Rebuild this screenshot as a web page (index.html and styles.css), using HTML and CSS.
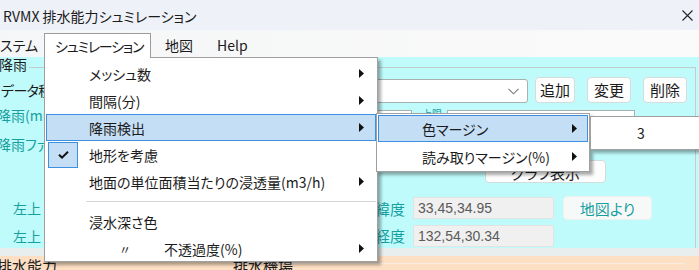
FILE: index.html
```html
<!DOCTYPE html>
<html lang="ja">
<head>
<meta charset="utf-8">
<title>RVMX 排水能力シュミレーション</title>
<link rel="stylesheet" href="styles.css">
</head>
<body>
<div class="win">
  <div class="titlebar">
    <span class="title">RVMX 排水能力シュミレーション</span>
    <svg class="close" width="11" height="11" viewBox="0 0 11 11"><path d="M0.5 0.5 L10.5 10.5 M10.5 0.5 L0.5 10.5" stroke="#222" stroke-width="1.1" fill="none"/></svg>
  </div>
  <div class="menubar">
    <span class="mi mi-cut">ステム</span>
    <span class="mi mi-open">シュミレーション</span>
    <span class="mi mi-map">地図</span>
    <span class="mi">Help</span>
  </div>
  <div class="client">
    <fieldset class="group">
      <legend class="gtitle">降雨</legend>
      <div class="row row1">
        <span class="lbl lbl-data">データ種別</span>
        <span class="combo"><svg width="11" height="7" viewBox="0 0 11 7"><path d="M0.5 0.8 L5.5 5.8 L10.5 0.8" stroke="#777" stroke-width="1.1" fill="none"/></svg></span>
        <span class="btn btn-add">追加</span>
        <span class="btn btn-chg">変更</span>
        <span class="btn btn-del">削除</span>
      </div>
      <div class="row row2">
        <span class="lbl teal lbl-cut">降雨(mm/h)</span>
        <span class="inp inp-a"></span>
        <span class="lbl teal small">上限</span>
        <span class="inp inp-b"></span>
      </div>
      <div class="row row3">
        <span class="lbl teal lbl-cut">降雨ファイル</span>
      </div>
      <div class="row row4">
        <span class="btn btn-graph">グラフ表示</span>
      </div>
      <div class="row row5">
        <span class="lbl teal lbl-left">左上</span>
        <span class="lbl teal lbl-deg">緯度</span>
        <span class="inp inp-ll">33,45,34.95</span>
        <span class="btn btn-map">地図より</span>
      </div>
      <div class="row row6">
        <span class="lbl teal lbl-left">左上</span>
        <span class="lbl teal lbl-deg">経度</span>
        <span class="inp inp-ll">132,54,30.34</span>
      </div>
    </fieldset>
  </div>
  <div class="band"></div>
  <div class="bottom">
    <span class="b-cap">排水能力</span>
    <div class="b-grid"><span>排水機場</span></div>
  </div>

  <div class="menu">
    <div class="it"><span class="tx">メッシュ数</span><svg class="arr" width="5" height="9" viewBox="0 0 5 9"><path d="M0 0 L5 4.5 L0 9 Z" fill="#111"/></svg></div>
    <div class="it"><span class="tx">間隔(分)</span><svg class="arr" width="5" height="9" viewBox="0 0 5 9"><path d="M0 0 L5 4.5 L0 9 Z" fill="#111"/></svg></div>
    <div class="it hl"><span class="tx">降雨検出</span><svg class="arr" width="5" height="9" viewBox="0 0 5 9"><path d="M0 0 L5 4.5 L0 9 Z" fill="#111"/></svg></div>
    <div class="it checked"><span class="chk"><svg width="11" height="8" viewBox="0 0 11 8"><path d="M1 3.8 L4 6.6 L10 0.8" stroke="#111" stroke-width="2" fill="none"/></svg></span><span class="tx">地形を考慮</span></div>
    <div class="it"><span class="tx">地面の単位面積当たりの浸透量(m3/h)</span><svg class="arr" width="5" height="9" viewBox="0 0 5 9"><path d="M0 0 L5 4.5 L0 9 Z" fill="#111"/></svg></div>
    <div class="sep"></div>
    <div class="it"><span class="tx">浸水深さ色</span></div>
    <div class="it"><span class="tx"><span class="ditto">〃</span>不透過度(%)</span><svg class="arr" width="5" height="9" viewBox="0 0 5 9"><path d="M0 0 L5 4.5 L0 9 Z" fill="#111"/></svg></div>
  </div>

  <div class="submenu">
    <div class="it hl"><span class="tx">色マージン</span><svg class="arr" width="5" height="9" viewBox="0 0 5 9"><path d="M0 0 L5 4.5 L0 9 Z" fill="#111"/></svg></div>
    <div class="it"><span class="tx">読み取りマージン(%)</span><svg class="arr" width="5" height="9" viewBox="0 0 5 9"><path d="M0 0 L5 4.5 L0 9 Z" fill="#111"/></svg></div>
  </div>

  <div class="subsub">
    <div class="it"><span class="tx">3</span></div>
  </div>
</div>
</body>
</html>
```

FILE: styles.css
```css
* { box-sizing: border-box; }
html, body { margin: 0; padding: 0; }
body {
  font-family: "Noto Sans CJK JP", "Noto Sans", sans-serif;
  font-feature-settings: "palt";
  color: #1b1b1b;
  background: #fff;
}
.win {
  position: relative;
  width: 699px;
  height: 270px;
  overflow: hidden;
  background: #fff;
}

/* title bar */
.titlebar {
  height: 30px;
  background: #eef2f8;
  display: flex;
  align-items: center;
  padding-left: 3px;
  padding-right: 6px;
}
.title { font-size: 14px; line-height: 1; flex: 1; padding-top: 2px; white-space: nowrap; }
.close { display: block; margin-top: 1px; }

/* menubar */
.menubar {
  height: 27px;
  background: linear-gradient(to right, #f5f6f7, #fafafa);
  display: flex;
  align-items: flex-start;
  padding-top: 3px;
}
.mi {
  height: 24px;
  display: flex;
  align-items: center;
  font-size: 14px;
  line-height: 1;
  white-space: nowrap;
}
.mi-cut { width: 44px; }
.mi-open {
  width: 107px;
  height: 25px;
  border: 1px solid #9c9c9c;
  border-bottom: none;
  background: #fff;
  padding-left: 10px;
  padding-bottom: 1px;
  letter-spacing: -1.2px;
  position: relative;
  z-index: 5;
}
.mi-map { margin-left: 14px; width: 52px; }

/* client area */
.client {
  height: 191px;
  background: #bffbfb;
}
.group {
  margin: 0;
  padding: 0;
  border: none;
  border-top: 1px solid #c3cccc;
  border-right: 1px solid #c3cccc;
  width: 696px;
  height: 191px;
}
.gtitle {
  font-size: 14px;
  line-height: 15px;
  padding: 0 2px 6px 0;
  margin-left: -1px;
}
.row { display: flex; align-items: center; }
.row1 { margin-top: -2px; height: 27px; }
.row2 { margin-top: 4px; height: 21px; align-items: flex-start; }
.row3 { margin-top: 6px; height: 20px; }
.row4 { margin-top: 6px; height: 23px; }
.row5 { margin-top: 13px; height: 24px; }
.row6 { margin-top: 4px; height: 23px; }

.lbl { font-size: 14px; line-height: 1; white-space: nowrap; }
.teal { color: #17a0a0; }
.lbl-data { width: 230px; padding-left: 1px; letter-spacing: -0.6px; }
.lbl-cut { margin-left: -3px; width: 303px; }
.row2 .lbl-cut { margin-top: 1px; }
.small { font-size: 10px; margin-left: 10px; margin-top: 2px; width: 25px; }
.lbl-left { width: 375px; padding-left: 13px; }
.lbl-deg { width: 38px; font-size: 15px; }

.combo {
  width: 298px;
  height: 24px;
  margin-top: 3px;
  background: #fff;
  border: 1px solid #a8b0b0;
  border-radius: 3px;
  display: flex;
  align-items: center;
  justify-content: flex-end;
  padding-right: 8px;
}
.btn {
  height: 26px;
  background: #fdfdfd;
  border: 1px solid #d4dcdc;
  border-radius: 4px;
  display: flex;
  align-items: center;
  justify-content: center;
  font-size: 15px;
  line-height: 1;
  white-space: nowrap;
}
.btn-add { width: 40px; margin-left: 7px; }
.btn-chg { width: 44px; margin-left: 12px; }
.btn-del { width: 44px; margin-left: 12px; }
.btn-graph { width: 121px; height: 23px; margin-left: 485px; align-items: flex-end; padding-bottom: 2px; }
.btn-map {
  width: 89px;
  height: 24px;
  margin-left: 9px;
  color: #17a0a0;
  background: #f7f9f9;
  border-color: #eaf1f1;
}
.inp {
  height: 21px;
  margin-top: 3px;
  background: #fff;
  border: 1px solid #a8b0b0;
}
.inp-a { width: 112px; margin-top: 3px; }
.inp-b { width: 188px; }
.inp-ll {
  width: 141px;
  height: 22px;
  margin: 0;
  background: #f0f0f0;
  border: 1px solid #e2e4e4;
  color: #5a5a5a;
  font-family: "Liberation Sans Narrow", "Liberation Sans", sans-serif;
  font-size: 14px;
  line-height: 1;
  display: flex;
  align-items: center;
  padding-left: 4px;
}

/* bottom */
.band { height: 8px; background: #e8eded; }
.bottom {
  height: 14px;
  background: #fddfc3;
  display: flex;
  align-items: flex-start;
}
.b-cap {
  font-size: 15px;
  line-height: 15px;
  margin-left: -3px;
  margin-top: 2px;
  width: 235px;
  white-space: nowrap;
}
.b-grid {
  flex: 0 0 453px;
  height: 20px;
  margin-top: 7px;
  border-top: 1px solid #f6ece2;
  border-right: 1px solid #f2e4d6;
  font-size: 15px;
  line-height: 15px;
}
.b-grid span { display: block; margin-top: -6px; margin-left: 1px; }

/* popup menus */
.menu, .submenu, .subsub {
  position: absolute;
  background: #fff;
  border: 1px solid #a0a0a0;
  box-shadow: 3px 3px 3px rgba(0, 0, 0, 0.33);
  font-size: 14px;
  line-height: 1;
}
.menu {
  left: 44px;
  top: 57px;
  width: 334px;
  height: 205px;
  padding: 2px 1px 0 1px;
  z-index: 2;
}
.it {
  height: 27px;
  display: flex;
  align-items: center;
  border: 1px solid transparent;
  padding-left: 42px;
  padding-right: 11px;
  position: relative;
}
.it .tx { flex: 1; white-space: nowrap; }
.it .arr { display: block; }
.it.hl { background: #c4def5; border-color: #3d8fe2; }
.it.checked { padding-left: 0; }
.chk {
  width: 30px;
  height: 26px;
  margin-left: 1px;
  margin-right: 11px;
  background: #c4def5;
  border: 1px solid #3d8fe2;
  display: flex;
  align-items: center;
  justify-content: center;
}
.sep {
  height: 7px;
  margin-left: 40px;
  border-bottom: 1px solid #d6d6d6;
  margin-bottom: 6px;
}
.ditto { display: inline-block; margin-left: 30px; width: 45px; font-size: 12px; }

.submenu {
  left: 376px;
  top: 113px;
  width: 214px;
  height: 59px;
  padding: 1px 1px 0 1px;
  z-index: 3;
}
.submenu .it { padding-left: 43px; padding-right: 10px; }
.submenu .it + .it { margin-top: 1px; }

.subsub {
  left: 590px;
  top: 116px;
  width: 130px;
  height: 34px;
  padding: 2px 1px 0 1px;
  z-index: 4;
}
.subsub .it { padding-left: 44px; }
```
